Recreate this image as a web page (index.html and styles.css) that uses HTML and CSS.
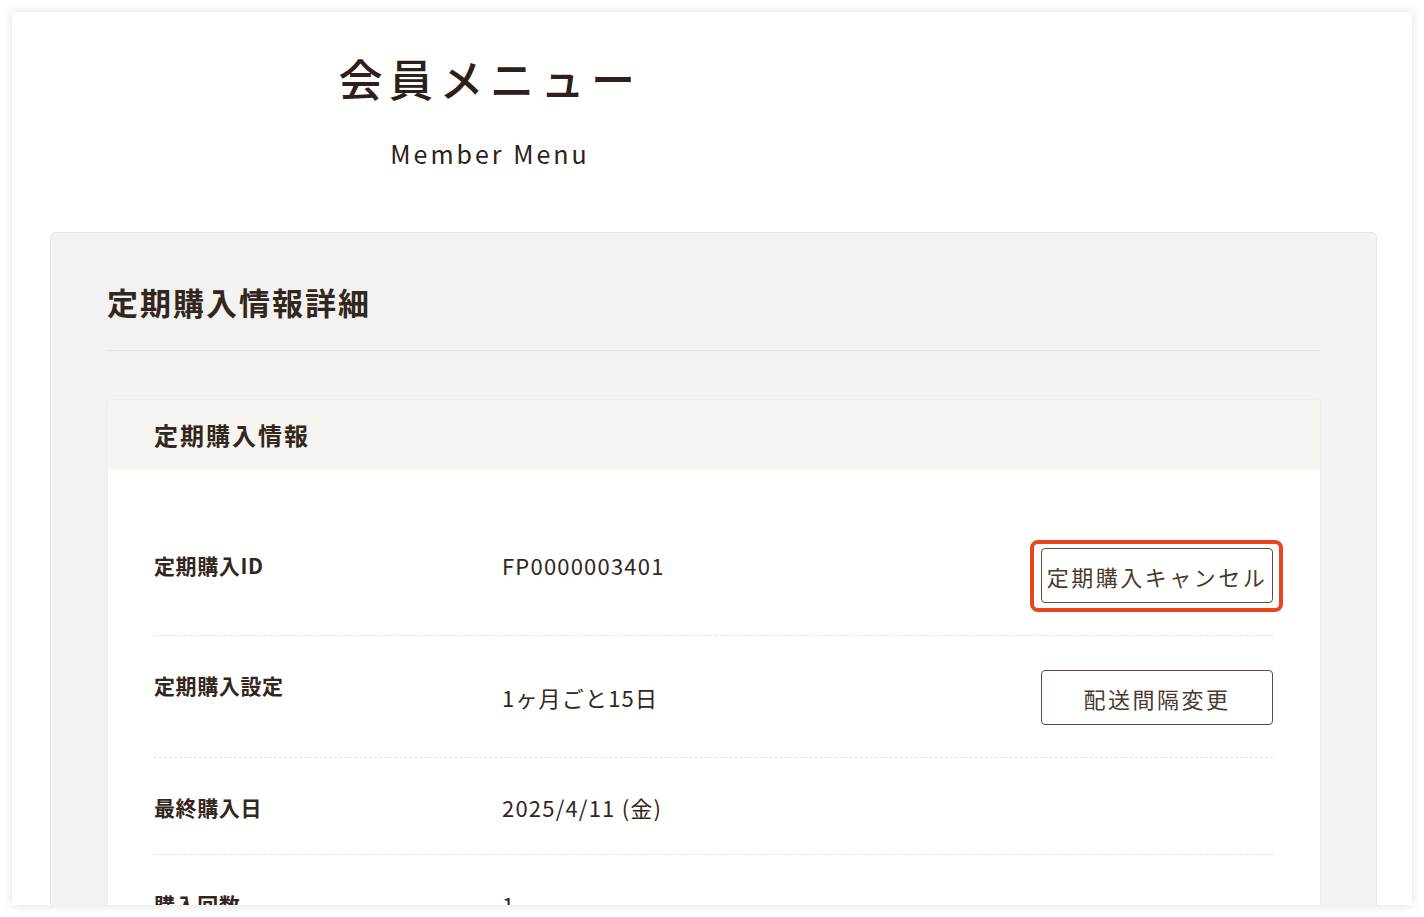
FILE: index.html
```html
<!DOCTYPE html>
<html lang="ja">
<head>
<meta charset="utf-8">
<title>会員メニュー</title>
<link rel="stylesheet" href="styles.css">
</head>
<body>
<div class="frame">
  <header class="page-head">
    <h1 class="page-title">会員メニュー</h1>
    <p class="page-sub">Member Menu</p>
  </header>
  <section class="panel">
    <h2 class="panel-title">定期購入情報詳細</h2>
    <div class="card">
      <div class="card-head">定期購入情報</div>
      <div class="card-body">
        <div class="row">
          <div class="label">定期購入ID</div>
          <div class="value value-top">FP0000003401</div>
          <div class="action action-top">
            <span class="highlight"><button class="btn">定期購入キャンセル</button></span>
          </div>
        </div>
        <div class="row">
          <div class="label">定期購入設定</div>
          <div class="value value-mid">1ヶ月ごと15日</div>
          <div class="action">
            <button class="btn">配送間隔変更</button>
          </div>
        </div>
        <div class="row">
          <div class="label">最終購入日</div>
          <div class="value value-top">2025/4/11 (金)</div>
          <div class="action"></div>
        </div>
        <div class="row">
          <div class="label">購入回数</div>
          <div class="value value-top">1</div>
          <div class="action"></div>
        </div>
      </div>
    </div>
  </section>
</div>
</body>
</html>
```
FILE: styles.css
```css
* { box-sizing: border-box; }
html, body { margin: 0; padding: 0; background: #ffffff; }
body {
  font-family: "Noto Sans CJK JP", "Noto Sans", sans-serif;
  color: #33261d;
}
.frame {
  margin: 12px;
  width: 1400px;
  height: 893px;
  background: #ffffff;
  box-shadow: 0 0 10px rgba(0, 0, 0, 0.13);
  overflow: hidden;
  padding: 35px 0 0 38px;
}
.page-head {
  width: 880px;
  text-align: center;
}
.page-title {
  margin: 0;
  font-size: 44px;
  line-height: 62px;
  font-weight: 500;
  letter-spacing: 6.5px;
  color: #2e2018;
}
.page-sub {
  margin: 26px 0 0;
  font-size: 25px;
  line-height: 36px;
  letter-spacing: 3px;
  font-weight: 400;
  color: #2e2018;
}
.panel {
  margin-top: 61px;
  width: 1327px;
  background: #f2f2f2;
  border: 1px solid #e7e7e7;
  border-radius: 5px;
  padding: 46px 55px 0 56px;
  min-height: 700px;
}
.panel-title {
  margin: 0;
  font-size: 31px;
  line-height: 46px;
  font-weight: 700;
  letter-spacing: 2px;
  color: #33261d;
  padding-bottom: 25px;
  border-bottom: 1px solid #e4e4e4;
}
.card {
  margin-top: 48px;
  background: #ffffff;
  border: 1px solid #ececec;
  border-radius: 4px;
  overflow: hidden;
  min-height: 600px;
}
.card-head {
  height: 70px;
  background: #f5f4f0;
  padding-left: 46px;
  font-size: 24px;
  line-height: 70px;
  font-weight: 700;
  letter-spacing: 2px;
  color: #33261d;
}
.card-body {
  padding: 46px 47px 0 46px;
}
.row {
  display: flex;
  align-items: flex-start;
  padding: 34px 0 32px;
  border-bottom: 1px dashed #e2e2e2;
}
.label {
  width: 348px;
  flex: none;
  font-size: 21px;
  line-height: 30px;
  font-weight: 700;
  letter-spacing: 0.6px;
  color: #33261d;
}
.value {
  flex: 1;
  font-size: 22px;
  line-height: 30px;
  font-weight: 400;
  color: #33261d;
  letter-spacing: 1.2px;
}
.value-mid { align-self: center; margin-top: -2px; }
.action {
  flex: none;
  width: 232px;
  min-height: 30px;
}
.action-top { margin-top: -2px; }
.btn {
  display: block;
  width: 232px;
  height: 55px;
  padding: 0;
  background: #ffffff;
  border: 1.5px solid #5b4b3d;
  border-radius: 4px;
  font-family: "Noto Sans CJK JP", "Noto Sans", sans-serif;
  font-size: 22px;
  letter-spacing: 2.5px;
  color: #4a3a2e;
  cursor: pointer;
}
.highlight {
  position: relative;
  display: block;
}
.highlight::after {
  content: "";
  position: absolute;
  left: -11px;
  top: -8px;
  right: -10px;
  bottom: -9px;
  border: 4px solid #e8461a;
  border-radius: 8px;
  pointer-events: none;
}
```
